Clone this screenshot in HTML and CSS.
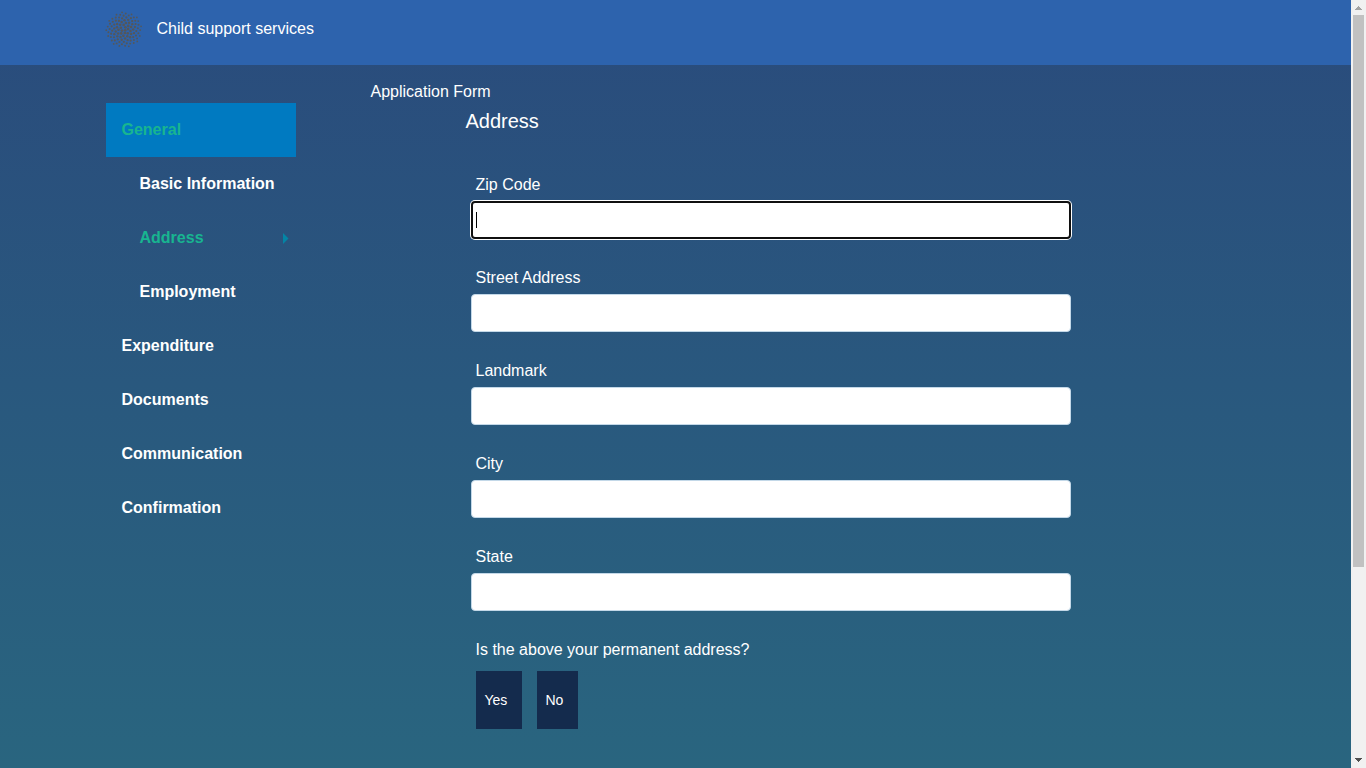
FILE: index.html
```html
<!DOCTYPE html>
<html lang="en">
<head>
<meta charset="utf-8">
<title>Child support services</title>
<link rel="stylesheet" href="styles.css">
</head>
<body>
<div class="page">
  <header class="header">
    <svg class="logo" id="logo" viewBox="-18 -18 36 36" aria-hidden="true"></svg>
    <span class="brand">Child support services</span>
  </header>
  <div class="layout">
    <nav class="sidebar">
      <a class="item selected">General</a>
      <a class="item sub">Basic Information</a>
      <a class="item sub current">Address<svg class="arrow" viewBox="0 0 5 10"><path d="M0 0 5 5 0 10Z"/></svg></a>
      <a class="item sub">Employment</a>
      <a class="item">Expenditure</a>
      <a class="item">Documents</a>
      <a class="item">Communication</a>
      <a class="item">Confirmation</a>
    </nav>
    <main class="main">
      <div class="title">Application Form</div>
      <form class="form">
        <h1 class="heading">Address</h1>
        <div class="field"><label class="label" for="zip">Zip Code</label><div class="input focused" id="zip" role="textbox"><span class="caret"></span></div></div>
        <div class="field"><label class="label" for="street">Street Address</label><input class="input" id="street"></div>
        <div class="field"><label class="label" for="landmark">Landmark</label><input class="input" id="landmark"></div>
        <div class="field"><label class="label" for="city">City</label><input class="input" id="city"></div>
        <div class="field"><label class="label" for="state">State</label><input class="input" id="state"></div>
        <div class="label">Is the above your permanent address?</div>
        <div class="choices">
          <button class="choice yes" type="button">Yes</button>
          <button class="choice no" type="button">No</button>
        </div>
      </form>
    </main>
  </div>
</div>
<div class="scrollbar">
  <svg class="scroll-arrow up" viewBox="0 0 15 15" shape-rendering="crispEdges"><path d="M7 6h1v1h1v1h1v1h1v1H4V9h1V8h1V7h1z"/></svg>
  <div class="thumb"></div>
  <svg class="scroll-arrow down" viewBox="0 0 15 15" shape-rendering="crispEdges"><path d="M4 5h7v1h-1v1H9v1H8v1H7V8H6V7H5V6H4z"/></svg>
</div>
<script src="logo.js"></script>
</body>
</html>
```
FILE: styles.css
```css
* { box-sizing: border-box; }
body {
  margin: 0;
  height: 768px;
  display: flex;
  overflow: hidden;
  font: 16px/24px "Liberation Sans", Arial, sans-serif;
  color: #fff;
}
.page {
  flex: 1;
  background: linear-gradient(#2a4b7c 0%, #29587e 50%, #29657f 100%);
}
.header {
  height: 65px;
  padding: 11px 0 0 106px;
  display: flex;
  align-items: flex-start;
  background: #2d63ad;
}
.logo { width: 36px; height: 37px; overflow: visible; fill: #555759; }
.brand { margin: 6px 0 0 14.5px; }
.layout { display: flex; padding-left: 106px; }
.sidebar { width: 190px; padding-top: 38px; }
.item {
  display: flex;
  align-items: center;
  height: 54px;
  padding: 0 7.5px 0 15.5px;
  font-weight: 700;
}
.selected { background: #007ac1; color: #18b590; }
.sub { padding-left: 33.5px; }
.current { color: #18b590; }
.arrow { width: 5.5px; height: 11px; margin-left: auto; fill: #0484a5; }
.main { margin-left: 74.5px; padding-top: 15px; }
.title { height: 24px; }
.form { width: 600px; margin-left: 100.5px; }
.heading { margin: 5px 0 40px -5.5px; font-size: 20px; line-height: 24px; font-weight: 400; }
.field { height: 93px; }
.label { display: block; height: 24px; padding-left: 4.5px; }
.input {
  display: block;
  width: 600px;
  height: 38px;
  margin-top: 4px;
  border: 1px solid #c3d8e8;
  border-radius: 4px;
  background: #fff;
}
.focused {
  display: flex;
  align-items: center;
  padding-left: 3px;
  border: 2px solid #101010;
  box-shadow: 0 0 0 1px #fff;
}
.caret { width: 1px; height: 16px; background: #000; }
.choices { display: flex; gap: 15px; margin: 9px 0 0 5px; }
.choice {
  height: 58px;
  padding: 0 0 0 8.5px;
  border: 0;
  background: #142b4d;
  color: #fff;
  font: 14px/20px "Liberation Sans", Arial, sans-serif;
  text-align: left;
}
.yes { width: 46px; }
.no { width: 41px; }
.scrollbar {
  width: 15px;
  display: flex;
  flex-direction: column;
  align-items: center;
  background: #f1f1f1;
}
.scroll-arrow { width: 15px; height: 15px; }
.up { fill: #a3a3a3; }
.down { margin-top: auto; fill: #505050; }
.thumb { width: 11px; height: 552px; background: #c1c1c1; }
```
FILE: logo.js
```js
// Sunflower spiral: dots shrink toward the rim.
const logo = document.getElementById('logo');
const count = 100;
for (let i = 0; i < count; i++) {
  const radius = 17.9 * Math.sqrt((i + 0.5) / count);
  const angle = i * 2.399963 + 0.4;
  const dot = document.createElementNS('http://www.w3.org/2000/svg', 'circle');
  dot.setAttribute('cx', radius * Math.cos(angle));
  dot.setAttribute('cy', 0.3 + radius * Math.sin(angle));
  dot.setAttribute('r', 1.35 - 0.5 * (radius / 17.9) ** 2);
  logo.appendChild(dot);
}
```
